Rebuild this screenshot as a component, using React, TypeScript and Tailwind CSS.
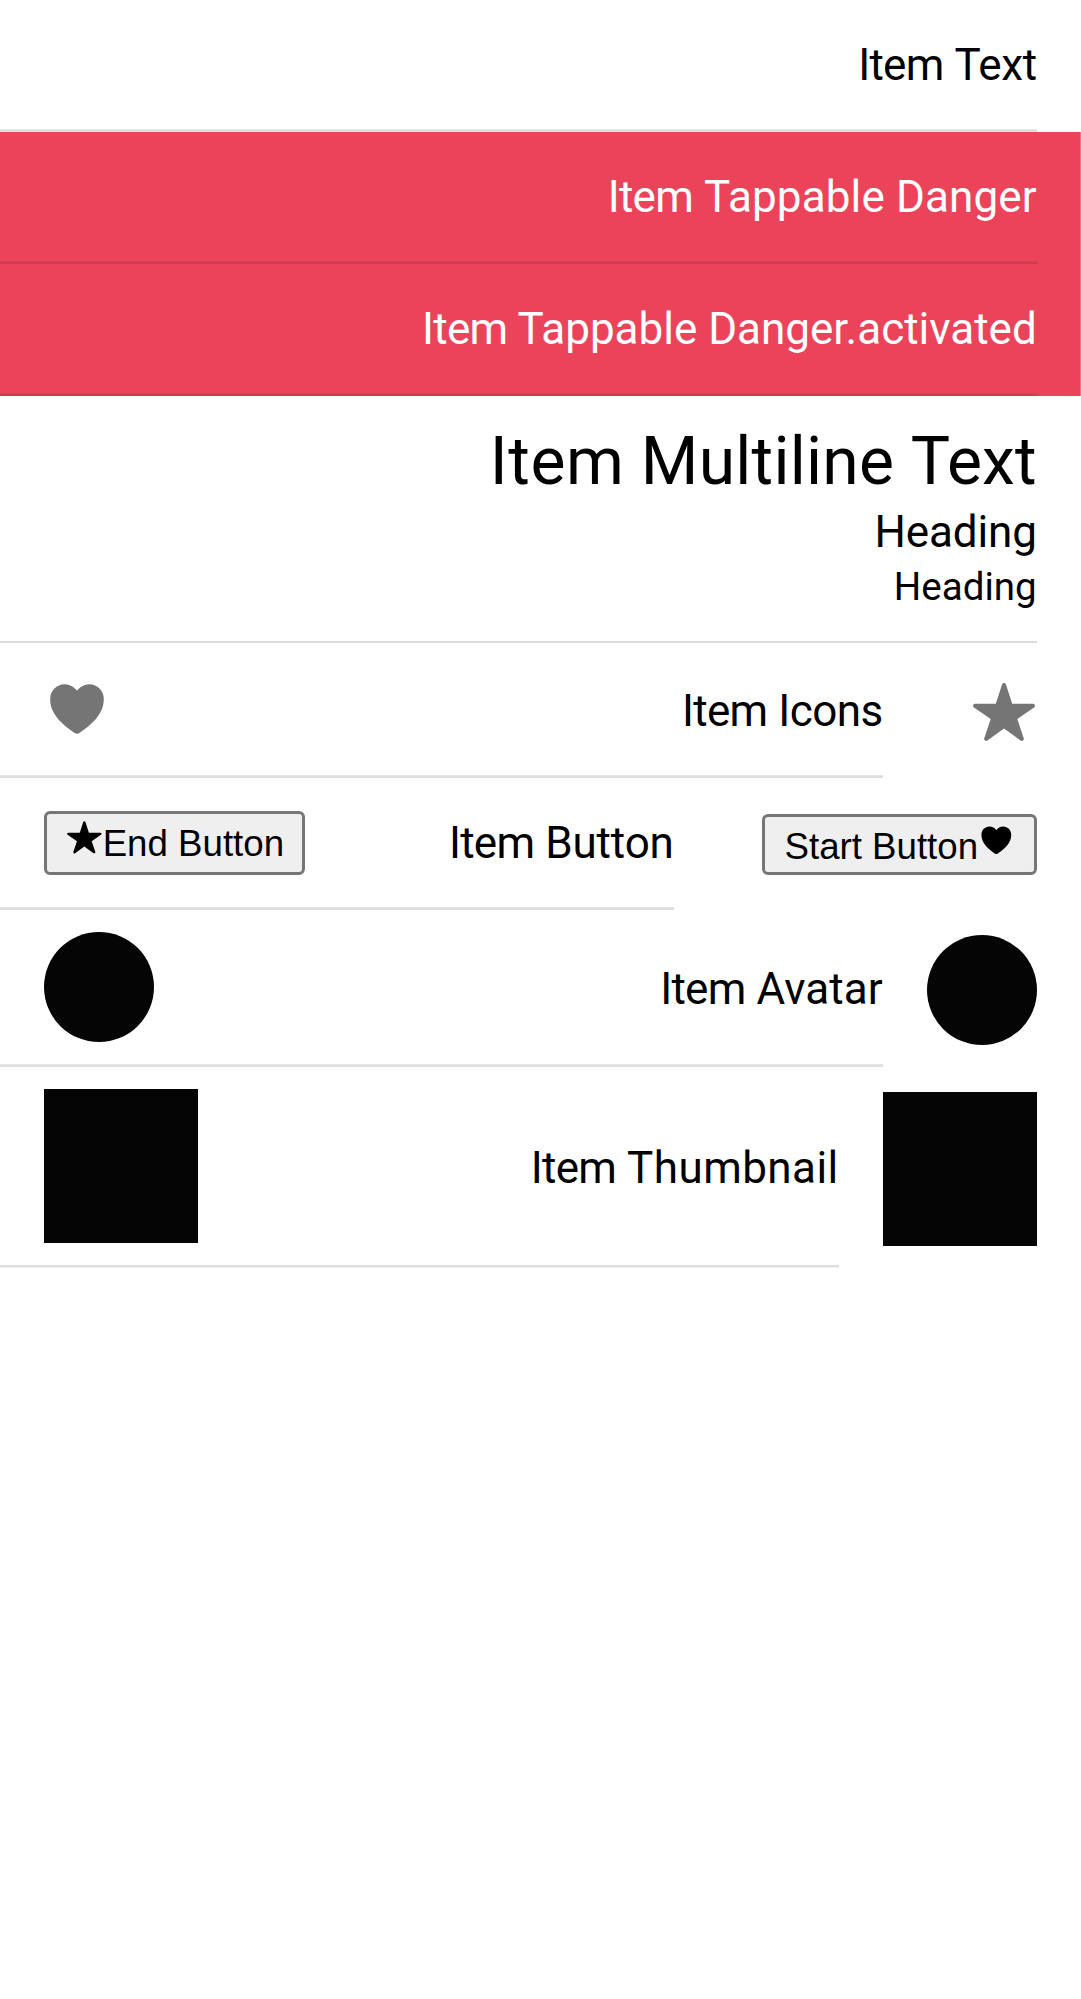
import type { ReactNode } from "react";

const HEART =
  "M256 448a32 32 0 01-18-5.57c-78.59-53.35-112.62-89.93-131.39-112.8-40-48.75-59.15-98.8-58.61-153C48.63 114.52 98.46 64 159.08 64c44.08 0 74.61 24.83 92.39 45.51a6 6 0 009.06 0C278.31 88.81 308.84 64 352.92 64c60.62 0 110.45 50.52 111.08 112.64.54 54.21-18.63 104.26-58.61 153-18.77 22.87-52.8 59.45-131.39 112.8A32 32 0 01256 448z";
const STAR =
  "M394 480a16 16 0 01-9.39-3L256 383.76 127.39 477a16 16 0 01-24.55-18.08L153 310.35 23 221.2a16 16 0 019-29.2h160.38l48.4-148.95a16 16 0 0130.44 0l48.4 149H480a16 16 0 019.05 29.2L359 310.35l50.13 148.53A16 16 0 01394 480z";

function Icon({ d, className }: { d: string; className: string }) {
  return (
    <svg viewBox="0 0 512 512" fill="currentColor" className={`shrink-0 ${className}`}>
      <path d={d} />
    </svg>
  );
}

const LINE = "border-t border-[#e6e6e6] bg-[#dedede] h-[3px]";
const LINE_THIN = "bg-[#dcdcdc] h-[2px]";
const LINE_LAST = "border-b border-[#f0f0f0] bg-[#dedede] h-[3px]";
const LINE_DANGER = "border-t border-[#d84158] bg-[#cf3c50] h-[3px]";

type ItemProps = {
  className: string;
  label: ReactNode;
  labelClass: string;
  line?: string;
  end?: ReactNode;
  start?: ReactNode;
};

/* Right-to-left list item: the start slot sits at the right edge, the divider runs under the rest. */
function Item({ className, label, labelClass, line = LINE, end, start }: ItemProps) {
  return (
    <div className={`flex w-full pr-[44px] ${className}`}>
      <div className="flex min-w-0 flex-1 flex-col">
        <div className="flex flex-1 items-start justify-between pl-[44px]">
          <div className="flex">{end}</div>
          <div className={`text-right whitespace-nowrap ${labelClass}`}>{label}</div>
        </div>
        <div className={line} />
      </div>
      {start}
    </div>
  );
}

/* "Item" prefix shared by every label, tracked slightly tighter than the word that follows. */
function Label({ children, tracking }: { children: string; tracking: string }) {
  return (
    <>
      <span className="tracking-[-0.74px]">Item</span> <span className={tracking}>{children}</span>
    </>
  );
}

const BUTTON =
  "flex items-start rounded-[6px] border-[3px] border-[#767676] bg-[#efefef] font-['Liberation_Sans',sans-serif] text-[36.67px] leading-[42px] whitespace-nowrap";

export default function App() {
  return (
    <main className="min-h-[1999px] w-[1080.75px] bg-white font-['Roboto',sans-serif] text-[44px] leading-[52px] text-black">
      <Item className="h-[132px]" labelClass="pt-[39px]" label={<Label tracking="tracking-[-0.35px]">Text</Label>} />
      <div className="border-r border-[#f07387] bg-[#eb445a] text-white [&>div]:pr-[43px]">
        <Item
          className="h-[132px]"
          labelClass="pt-[39px]"
          label={<Label tracking="tracking-[0.13px]">Tappable Danger</Label>}
          line={LINE_DANGER}
        />
        <Item
          className="h-[132px]"
          labelClass="pt-[39px]"
          label={<Label tracking="tracking-[0px]">Tappable Danger.activated</Label>}
          line={LINE_DANGER}
        />
      </div>
      <Item
        className="h-[247px]"
        labelClass="pt-[27px]"
        line={LINE_THIN}
        label={
          <>
            <h1 className="text-[66px] leading-[78px]">
              <span className="tracking-[0.6px]">Item</span> <span className="tracking-[0.24px]">Multiline</span>{" "}
              <span className="tracking-[0.15px]">Text</span>
            </h1>
            <h3 className="mt-[5px] text-[44px] leading-[52px] tracking-[-0.12px]">Heading</h3>
            <h4 className="mt-[6px] text-[38.5px] leading-[46px] tracking-[0.04px]">Heading</h4>
          </>
        }
      />
      <Item
        className="h-[135px]"
        labelClass="pt-[42px]"
        label={<Label tracking="tracking-[-0.52px]">Icons</Label>}
        end={<Icon d={HEART} className="mt-[33.25px] h-[66px] w-[66px] text-[#757575]" />}
        start={<Icon d={STAR} className="mt-[36px] ml-[88px] h-[66px] w-[66px] text-[#757575]" />}
      />
      <Item
        className="h-[132px]"
        labelClass="pt-[39px]"
        label={<Label tracking="tracking-[-0.15px]">Button</Label>}
        end={
          <button className={`${BUTTON} mt-[33px] h-[63.5px] w-[261px] pl-[19px]`}>
            <Icon d={STAR} className="mt-[5px] h-[36.67px] w-[36.67px]" />
            <span className="mt-[9px]">End Button</span>
          </button>
        }
        start={
          <button className={`${BUTTON} mt-[36px] ml-[88px] h-[60.5px] w-[275px] shrink-0 pl-[19.75px]`}>
            <span className="mt-[9px]">Start Button</span>
            <Icon d={HEART} className="mt-[5px] h-[36.67px] w-[36.67px]" />
          </button>
        }
      />
      <Item
        className="h-[157px]"
        labelClass="pt-[53px]"
        label={<Label tracking="tracking-[0.08px]">Avatar</Label>}
        end={<div className="mt-[22px] size-[110px] rounded-full bg-[#050505]" />}
        start={<div className="mt-[25px] ml-[44px] size-[110px] shrink-0 rounded-full bg-[#050505]" />}
      />
      <Item
        className="h-[201px]"
        labelClass="pt-[75px]"
        label={<Label tracking="tracking-[0.44px]">Thumbnail</Label>}
        line={LINE_LAST}
        end={<div className="mt-[22px] size-[154px] bg-[#050505]" />}
        start={<div className="mt-[25px] ml-[44px] size-[154px] shrink-0 bg-[#050505]" />}
      />
    </main>
  );
}
